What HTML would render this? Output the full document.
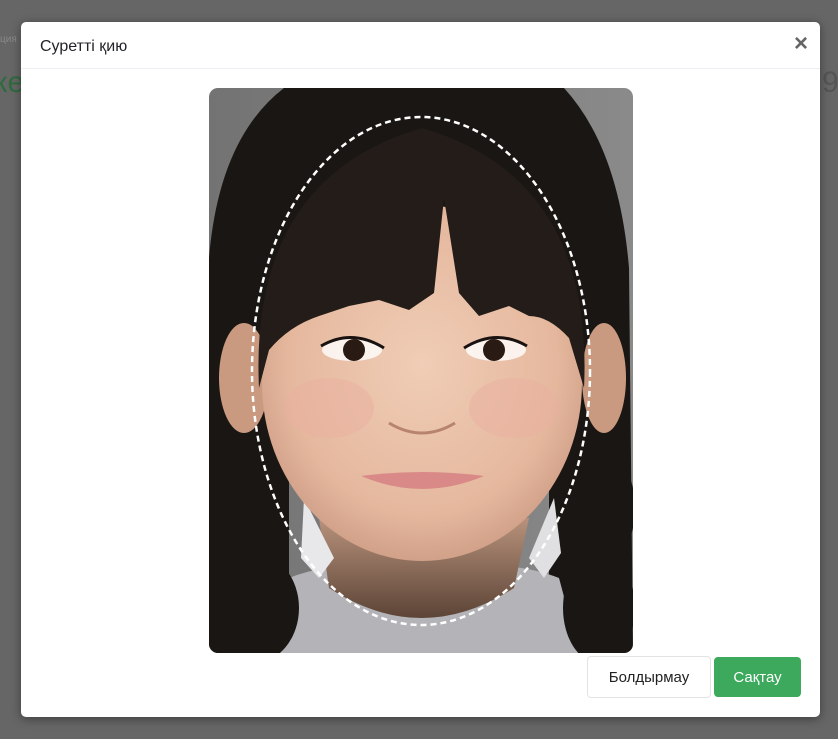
<!DOCTYPE html>
<html><head><meta charset="utf-8"><style>
html,body{margin:0;padding:0;}
body{width:838px;height:739px;background:#666;position:relative;overflow:hidden;font-family:"Liberation Sans",sans-serif;}
.bgtxt{position:absolute;color:#2f6b3f;font-size:30px;}
.modal{position:absolute;left:21px;top:22px;width:799px;height:695px;background:#fff;border-radius:5px;box-shadow:0 2px 10px rgba(0,0,0,.4);}
.hdr{height:46px;border-bottom:1px solid #eceff2;position:relative;}
.title{position:absolute;left:19px;top:16px;font-size:16px;color:#212529;}
.close{position:absolute;right:12px;top:8px;font-size:24px;color:#666;font-weight:bold;}
.photo{position:absolute;left:188px;top:66px;width:424px;height:565px;border-radius:9px;overflow:hidden;}
.btn{position:absolute;font-size:15px;border-radius:4px;text-align:center;box-sizing:border-box;}
.cancel{left:566px;top:634px;width:124px;height:42px;border:1px solid #e3e3e3;color:#222;line-height:42px;}
.save{left:693px;top:635px;width:87px;height:40px;background:#3ca95d;color:#fff;line-height:42px;}
</style></head><body>
<div class="bgtxt" style="left:-6px;top:66px;">ке</div>
<div class="bgtxt" style="left:822px;top:66px;color:#555">9</div>
<div style="position:absolute;left:0;top:34px;font-size:10px;color:#888">ция</div>
<div class="modal">
 <div class="hdr"><div class="title">Суретті қию</div><div class="close">×</div></div>
 <div class="photo">
 <svg width="424" height="565" viewBox="0 0 424 565">
  <defs>
   <radialGradient id="skin" cx="50%" cy="45%" r="60%"><stop offset="0" stop-color="#f0cdb6"/><stop offset="0.7" stop-color="#e5b89e"/><stop offset="1" stop-color="#c99880"/></radialGradient>
   <linearGradient id="bg" x1="0" x2="1"><stop offset="0" stop-color="#737373"/><stop offset="1" stop-color="#8a8a8a"/></linearGradient>
   <linearGradient id="neck" x1="0" y1="0" x2="0" y2="1"><stop offset="0" stop-color="#b8927c"/><stop offset="1" stop-color="#5c4436"/></linearGradient>
  </defs>
  <rect width="424" height="565" fill="url(#bg)"/>
  <path d="M75 0 L355 0 Q410 60 420 180 L424 565 L340 565 L340 300 L80 300 L80 565 L0 565 L0 170 Q10 50 75 0Z" fill="#1a1614"/>
  <path d="M60 565 L80 490 Q130 470 213 480 Q300 470 350 490 L370 565Z" fill="#b4b4b8"/>
  <path d="M110 430 L120 500 Q213 560 305 500 L320 430Z" fill="url(#neck)"/>
  <path d="M95 410 L125 470 L110 490 L92 470Z" fill="#e8e8ea"/>
  <path d="M345 410 L320 470 L335 490 L352 465Z" fill="#e0e0e2"/>
  <ellipse cx="35" cy="290" rx="25" ry="55" fill="#c99a80"/>
  <ellipse cx="395" cy="290" rx="22" ry="55" fill="#c99a80"/>
  <ellipse cx="213" cy="295" rx="160" ry="178" fill="url(#skin)"/>
  <ellipse cx="120" cy="320" rx="45" ry="30" fill="#eab0a0" opacity=".5"/>
  <ellipse cx="305" cy="320" rx="45" ry="30" fill="#eab0a0" opacity=".5"/>
  <path d="M50 300 Q40 90 213 40 Q385 90 375 300 L360 250 Q340 228 320 228 L300 218 L270 228 L250 205 L235 110 L225 205 L200 222 L170 212 L140 218 L110 228 Q80 238 60 262Z" fill="#231c18"/>
  <ellipse cx="143" cy="262" rx="30" ry="11" fill="#fff" opacity=".8"/>
  <ellipse cx="287" cy="262" rx="30" ry="11" fill="#fff" opacity=".8"/>
  <circle cx="145" cy="262" r="11" fill="#2a1a14"/>
  <circle cx="285" cy="262" r="11" fill="#2a1a14"/>
  <path d="M112 258 Q143 240 175 260" stroke="#1a1210" stroke-width="3" fill="none"/>
  <path d="M255 260 Q287 240 318 258" stroke="#1a1210" stroke-width="3" fill="none"/>
  <path d="M180 335 Q213 355 246 335" stroke="#b88470" stroke-width="3" fill="none"/>
  <path d="M152 388 Q213 380 275 388 Q213 414 152 388Z" fill="#d98a88"/>
  <ellipse cx="40" cy="420" rx="40" ry="60" fill="#1a1614"/>
  <ellipse cx="45" cy="520" rx="45" ry="55" fill="#1a1614"/>
  <ellipse cx="390" cy="420" rx="36" ry="60" fill="#1a1614"/>
  <ellipse cx="390" cy="520" rx="36" ry="55" fill="#1a1614"/>
  <ellipse cx="212" cy="283" rx="169" ry="254" fill="none" stroke="#fff" stroke-width="2.5" stroke-dasharray="6 4"/>
 </svg>
 </div>
 <div class="btn cancel">Болдырмау</div>
 <div class="btn save">Сақтау</div>
</div>
</body></html>
